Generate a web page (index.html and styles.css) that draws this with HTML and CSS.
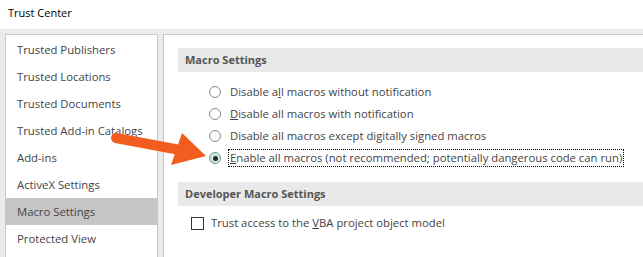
FILE: index.html
```html
<!DOCTYPE html>
<html lang="en">

<head>
    <meta charset="UTF-8">
    <title>Trust Center</title>
    <link rel="stylesheet" href="styles.css">
</head>

<body>
    <div class="titlebar">Trust Center</div>
    <div class="main">
        <div class="nav">
            <div class="item">Trusted Publishers</div>
            <div class="item">Trusted Locations</div>
            <div class="item">Trusted Documents</div>
            <div class="item">Trusted Add-in Catalogs</div>
            <div class="item">Add-ins</div>
            <div class="item">ActiveX Settings</div>
            <div class="item selected">Macro Settings</div>
            <div class="item">Protected View</div>
        </div>
        <div class="content">
            <div class="band">Macro Settings</div>
            <div class="options">
                <div class="row"><span class="radio"></span><span class="label">Disable a<u>l</u>l macros without notification</span></div>
                <div class="row"><span class="radio"></span><span class="label"><u>D</u>isable all macros with notification</span></div>
                <div class="row"><span class="radio"></span><span class="label">Disable all macros except di<u>g</u>itally signed macros</span></div>
                <div class="row"><span class="radio checked"></span><span class="label focus"><u>E</u>nable all macros (not recommended; potentially dangerous code can run)</span></div>
            </div>
            <div class="band second">Developer Macro Settings</div>
            <div class="checks">
                <div class="row"><span class="box"></span><span class="label">Trust access to the <u>V</u>BA project object model</span></div>
            </div>
        </div>
    </div>
    <svg class="arrow" width="643" height="257" viewBox="0 0 643 257">
        <line x1="116" y1="138" x2="180" y2="150" stroke="#f25c1e" stroke-width="10" stroke-linecap="round" />
        <polygon points="182,133 206,156 171,165" fill="#f25c1e" />
    </svg>
</body>

</html>
```

FILE: styles.css
```css
body {
    margin: 0;
    font-family: "Open Sans", "Noto Sans", sans-serif;
    font-size: 11.3px;
    color: #444;
    width: 643px;
    height: 257px;
    overflow: hidden;
    position: relative;
}

.titlebar {
    height: 29px;
    line-height: 26px;
    padding-left: 8px;
    color: #000;
    font-size: 11px;
    background: #fff;
}

.main {
    display: flex;
    gap: 5px;
    padding: 5px 0 0 5px;
    height: 223px;
    background: #ebebeb;
}

.nav {
    width: 151px;
    flex-shrink: 0;
    background: #fff;
    border: 1px solid #c8c8c8;
    border-bottom: none;
    padding-top: 1px;
}

.item {
    height: 27px;
    line-height: 27px;
    padding-left: 11px;
    white-space: nowrap;
}

.selected {
    background: #c6c6c6;
}

.content {
    flex: 1;
    background: #fff;
    border: 1px solid #c8c8c8;
    border-right: none;
    border-bottom: none;
    padding: 13px 0 0 14px;
}

.band {
    height: 24px;
    line-height: 24px;
    padding-left: 7px;
    background: #e9e9e9;
    font-weight: bold;
    font-size: 11px;
    color: #555;
}

.second {
    margin-top: 13px;
}

.options {
    margin-top: 9px;
    padding-left: 31px;
}

.checks {
    margin-top: 6px;
    padding-left: 13px;
}

.row {
    display: flex;
    align-items: center;
    height: 22px;
    white-space: nowrap;
}

.radio {
    width: 10px;
    height: 10px;
    border: 1px solid #8a8a8a;
    border-radius: 50%;
    margin-right: 7px;
    display: flex;
    align-items: center;
    justify-content: center;
}

.checked {
    background: #cde8e0;
    border-color: #6a9e92;
}

.checked::after {
    content: "";
    width: 5px;
    height: 5px;
    border-radius: 50%;
    background: #2b2b2b;
}

.label {
    padding: 0 1px;
    border: 1px dotted transparent;
    line-height: 16px;
}

.focus {
    border-color: #000;
}

.box {
    width: 11px;
    height: 11px;
    border: 1px solid #333;
    margin-right: 5px;
}

.arrow {
    position: absolute;
    left: 0;
    top: 0;
    pointer-events: none;
}
```
